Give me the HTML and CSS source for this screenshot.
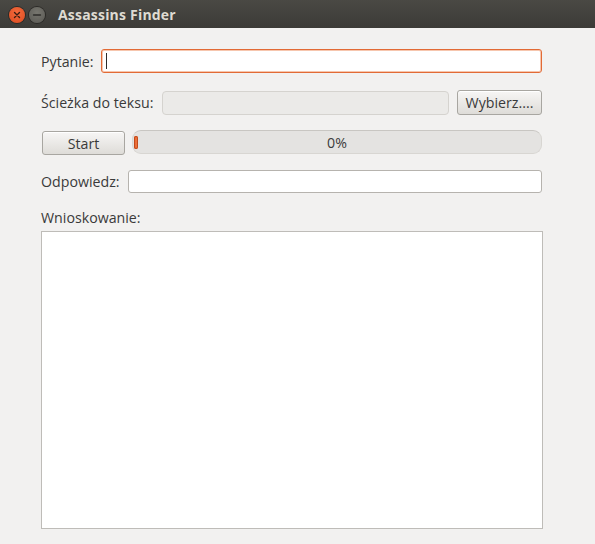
FILE: index.html
```html
<!DOCTYPE html>
<html lang="pl">
<head>
<meta charset="utf-8">
<title>Assassins Finder</title>
<link rel="stylesheet" href="styles.css">
</head>
<body>
<div class="window">
  <div class="titlebar">
    <span class="wbtn close"><svg width="16" height="16" viewBox="0 0 16 16"><path d="M5.5 5.5L10.5 10.5M10.5 5.5L5.5 10.5" stroke="#3a1d12" stroke-width="1.4" stroke-linecap="round"/></svg></span>
    <span class="wbtn mini"><svg width="16" height="16" viewBox="0 0 16 16"><path d="M4.5 8H11.5" stroke="#2e2d2a" stroke-width="1.4" stroke-linecap="round"/></svg></span>
    <span class="title">Assassins Finder</span>
  </div>
  <div class="content">
    <div class="row r1">
      <span class="label">Pytanie:</span>
      <div class="entry focus"><span class="caret"></span></div>
    </div>
    <div class="row r2">
      <span class="label">Ścieżka do teksu:</span>
      <div class="entry disabled"></div>
      <button class="btn choose">Wybierz....</button>
    </div>
    <div class="row r3">
      <button class="btn start">Start</button>
      <div class="progress"><span class="fill"></span><span class="ptext">0%</span></div>
    </div>
    <div class="row r4">
      <span class="label">Odpowiedz:</span>
      <div class="entry"></div>
    </div>
    <div class="label wlabel">Wnioskowanie:</div>
    <div class="textarea"></div>
  </div>
</div>
</body>
</html>
```

FILE: styles.css
```css
html, body {
  margin: 0;
  padding: 0;
  background: #f2f1f0;
}
body {
  font-family: "Open Sans", "DejaVu Sans", sans-serif;
  font-size: 14.2px;
  color: #3a3a3a;
  width: 595px;
  height: 544px;
  overflow: hidden;
}
.titlebar {
  height: 28px;
  background: linear-gradient(#4a4944, #3c3b37);
  display: flex;
  align-items: center;
  padding-left: 9px;
  box-sizing: border-box;
}
.wbtn {
  width: 16px;
  height: 16px;
  border-radius: 50%;
  display: flex;
  align-items: center;
  justify-content: center;
  margin-top: 2px;
}
.wbtn.close {
  background: radial-gradient(circle at 50% 35%, #f36b3d, #dc4a1f);
  box-shadow: 0 0 0 1px #2b2a27;
}
.wbtn.mini {
  margin-left: 4px;
  background: radial-gradient(circle at 50% 35%, #77766f, #595853);
  box-shadow: 0 0 0 1px #2b2a27;
}
.title {
  margin-left: 13px;
  color: #dfdbd2;
  font-weight: bold;
  font-size: 14px;
  margin-top: 1px;
  letter-spacing: 0.2px;
}
.content {
  padding: 21px 53px 0 41px;
  display: flex;
  flex-direction: column;
}
.row {
  display: flex;
  align-items: center;
  gap: 7px;
}
.r1 { height: 24px; }
.r2 { height: 25px; margin-top: 17px; }
.r3 { height: 25px; margin-top: 15px; align-items: flex-start; gap: 7px; }
.r4 { height: 23px; margin-top: 15px; }
.label { white-space: nowrap; }
.r2 .label { margin-right: 2px; }
.r4 .label { margin-right: 1px; }
.entry {
  flex: 1;
  height: 100%;
  background: #fff;
  border: 1px solid #b6b3ae;
  border-radius: 3px;
  box-sizing: border-box;
  position: relative;
}
.entry.focus {
  border: 1px solid #e26a35;
  box-shadow: inset 0 0 0 1px #f6c6ae;
}
.caret {
  position: absolute;
  left: 4px;
  top: 3px;
  width: 1px;
  height: 16px;
  background: #2a2a2a;
}
.entry.disabled {
  background: #ebeae8;
  border-color: #d5d3cf;
  border-radius: 4px;
  height: 24px;
}
.btn {
  font-family: inherit;
  font-size: inherit;
  color: #3a3a3a;
  height: 25px;
  border: 1px solid #a8a6a1;
  border-radius: 3px;
  background: linear-gradient(#f7f6f5, #dedcd8);
  box-shadow: inset 0 1px 0 #fff;
  padding: 0;
}
.choose {
  width: 85px;
  margin-left: 1px;
}
.start {
  width: 83px;
  margin-left: 1px;
  margin-top: 1px;
  height: 24px;
}
.progress {
  flex: 1;
  height: 24px;
  background: #e4e3e1;
  border: 1px solid #d8d6d2;
  border-top-color: #c8c6c2;
  border-radius: 9px;
  box-sizing: border-box;
  position: relative;
  display: flex;
  align-items: center;
  justify-content: center;
}
.fill {
  position: absolute;
  left: 1px;
  top: 5px;
  width: 4px;
  height: 13px;
  border-radius: 2px;
  background: linear-gradient(90deg, #e7622d, #f07a45);
  box-shadow: 0 0 0 1px #c24a1b inset;
}
.ptext {
  color: #3a3a3a;
}
.wlabel {
  margin-top: 15px;
  line-height: 20px;
}
.textarea {
  margin-top: 3px;
  height: 298px;
  width: 502px;
  background: #fff;
  border: 1px solid #bebcb8;
  box-sizing: border-box;
}
```
